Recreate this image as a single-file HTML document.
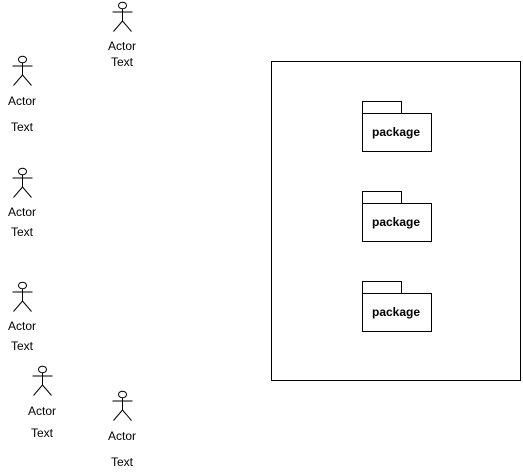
<!DOCTYPE html>
<html><head><style>
html,body{margin:0;padding:0;background:#fff;width:523px;height:472px;overflow:hidden}
svg text{font-family:"Liberation Sans",sans-serif;font-size:12px;fill:#000}
</style></head><body>
<svg width="523" height="472" viewBox="0 0 523 472" xmlns="http://www.w3.org/2000/svg">
<defs>
<g id="a" fill="#fff" stroke="#000" stroke-width="1">
<ellipse cx="0" cy="3.5" rx="4" ry="3.3"/>
<path d="M0 7V19M-10 10H10M0 19L-9 29.5M0 19L9 29.5" fill="none"/>
</g>
</defs>
<use href="#a" x="122.5" y="2"/>
<use href="#a" x="22.5" y="56"/>
<use href="#a" x="22.5" y="168"/>
<use href="#a" x="22.5" y="282"/>
<use href="#a" x="42.5" y="366"/>
<use href="#a" x="122.5" y="391"/>
<g text-anchor="middle">
<text x="122" y="50">Actor</text><text x="122" y="66">Text</text>
<text x="22" y="105">Actor</text><text x="22" y="131">Text</text>
<text x="22" y="216">Actor</text><text x="22" y="236">Text</text>
<text x="22" y="330">Actor</text><text x="22" y="350">Text</text>
<text x="42" y="415">Actor</text><text x="42" y="437">Text</text>
<text x="122" y="440">Actor</text><text x="122" y="466">Text</text>
</g>
<rect x="271.5" y="61.5" width="249" height="319" fill="none" stroke="#000"/>
<g fill="#fff" stroke="#000">
<rect x="362.5" y="101.5" width="39" height="12"/><rect x="362.5" y="113.5" width="69" height="38"/>
<rect x="362.5" y="191.5" width="39" height="12"/><rect x="362.5" y="203.5" width="69" height="38"/>
<rect x="362.5" y="281.5" width="39" height="12"/><rect x="362.5" y="293.5" width="69" height="38"/>
</g>
<g text-anchor="middle" font-weight="bold">
<text x="396" y="136" style="font-weight:bold">package</text>
<text x="396" y="226" style="font-weight:bold">package</text>
<text x="396" y="316" style="font-weight:bold">package</text>
</g>
</svg>
</body></html>
